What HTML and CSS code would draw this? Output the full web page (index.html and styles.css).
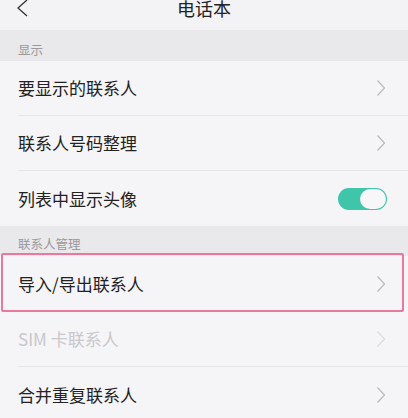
FILE: index.html
```html
<!DOCTYPE html>
<html lang="zh">
<head>
<meta charset="utf-8">
<link rel="stylesheet" href="styles.css">
</head>
<body>
<div class="screen">
  <header class="topbar">
    <svg class="back" width="14" height="20" viewBox="0 0 14 20"><path d="M11 1 L2 9 L11 17" fill="none" stroke="#333" stroke-width="1.3"/></svg>
    <div class="title">电话本</div>
  </header>
  <div class="section">显示</div>
  <div class="row">
    <span class="label">要显示的联系人</span>
    <svg class="chev" width="10" height="18" viewBox="0 0 10 18"><path d="M1.5 1.5 L8.5 9 L1.5 16.5" fill="none" stroke="#b9b9bc" stroke-width="1.2"/></svg>
  </div>
  <div class="row">
    <span class="label">联系人号码整理</span>
    <svg class="chev" width="10" height="18" viewBox="0 0 10 18"><path d="M1.5 1.5 L8.5 9 L1.5 16.5" fill="none" stroke="#b9b9bc" stroke-width="1.2"/></svg>
  </div>
  <div class="row last">
    <span class="label">列表中显示头像</span>
    <div class="toggle"><div class="knob"></div></div>
  </div>
  <div class="section s2">联系人管理</div>
  <div class="group">
    <div class="row">
      <span class="label">导入/导出联系人</span>
      <svg class="chev" width="10" height="18" viewBox="0 0 10 18"><path d="M1.5 1.5 L8.5 9 L1.5 16.5" fill="none" stroke="#b9b9bc" stroke-width="1.2"/></svg>
    </div>
    <div class="highlight"></div>
    <div class="row">
      <span class="label disabled">SIM 卡联系人</span>
      <svg class="chev" width="10" height="18" viewBox="0 0 10 18"><path d="M1.5 1.5 L8.5 9 L1.5 16.5" fill="none" stroke="#dcdcde" stroke-width="1.2"/></svg>
    </div>
    <div class="row">
      <span class="label">合并重复联系人</span>
      <svg class="chev" width="10" height="18" viewBox="0 0 10 18"><path d="M1.5 1.5 L8.5 9 L1.5 16.5" fill="none" stroke="#b9b9bc" stroke-width="1.2"/></svg>
    </div>
  </div>
</div>
</body>
</html>
```
FILE: styles.css
```css
html, body {
  margin: 0;
  padding: 0;
  background: #f5f4f7;
  font-family: "Noto Sans CJK SC", "Noto Sans", sans-serif;
}
.screen {
  width: 408px;
  height: 418px;
  overflow: hidden;
  background: #f5f4f7;
}
.topbar {
  height: 30px;
  background: #f3f2f5;
  display: flex;
  justify-content: center;
  position: relative;
}
.back {
  position: absolute;
  left: 16px;
  top: -1px;
}
.title {
  font-size: 18px;
  line-height: 18px;
  color: #222;
  margin-top: -1px;
}
.section {
  height: 31px;
  box-sizing: border-box;
  background: #e9e8eb;
  color: #9a999c;
  font-size: 12.5px;
  padding: 13px 0 0 18px;
  line-height: 14px;
}
.section.s2 {
  height: 30px;
  padding-top: 11px;
}
.row {
  height: 55px;
  box-sizing: border-box;
  margin-left: 18px;
  padding-right: 22px;
  display: flex;
  align-items: center;
  justify-content: space-between;
  border-bottom: 1px solid #e7e6e9;
}
.row.last, .group .row:last-child {
  border-bottom: none;
}
.group .row:first-child {
  border-bottom: none;
  height: 56px;
}
.group {
  position: relative;
}
.label {
  font-size: 17px;
  color: #222;
  line-height: 20px;
}
.label.disabled {
  color: #c9c8cb;
}
.chev {
  display: block;
}
.toggle {
  width: 49px;
  height: 22px;
  box-sizing: border-box;
  border-radius: 11px;
  background: #3ec5aa;
  display: flex;
  justify-content: flex-end;
  align-items: center;
  padding-right: 1px;
  margin-right: -1px;
}
.knob {
  width: 26px;
  height: 20px;
  border-radius: 10px;
  background: #f7f6f9;
}
.highlight {
  position: absolute;
  left: 1px;
  top: -3px;
  width: 403px;
  height: 59px;
  box-sizing: border-box;
  border: 2.5px solid #e8789c;
  border-radius: 2px;
  pointer-events: none;
}
```
